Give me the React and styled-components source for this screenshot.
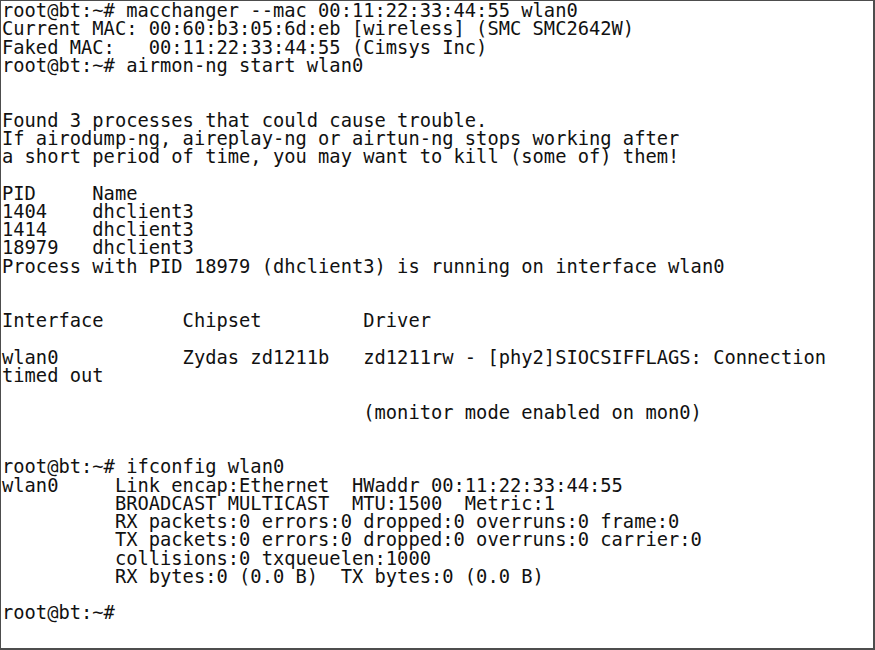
import React from "react";
import styled, { createGlobalStyle } from "styled-components";

const GlobalStyle = createGlobalStyle`
  html, body {
    margin: 0;
    padding: 0;
    background: #ffffff;
  }
`;

const lines = [
  "root@bt:~# macchanger --mac 00:11:22:33:44:55 wlan0",
  "Current MAC: 00:60:b3:05:6d:eb [wireless] (SMC SMC2642W)",
  "Faked MAC:   00:11:22:33:44:55 (Cimsys Inc)",
  "root@bt:~# airmon-ng start wlan0",
  "",
  "",
  "Found 3 processes that could cause trouble.",
  "If airodump-ng, aireplay-ng or airtun-ng stops working after",
  "a short period of time, you may want to kill (some of) them!",
  "",
  "PID     Name",
  "1404    dhclient3",
  "1414    dhclient3",
  "18979   dhclient3",
  "Process with PID 18979 (dhclient3) is running on interface wlan0",
  "",
  "",
  "Interface       Chipset         Driver",
  "",
  "wlan0           Zydas zd1211b   zd1211rw - [phy2]SIOCSIFFLAGS: Connection",
  "timed out",
  "",
  "                                (monitor mode enabled on mon0)",
  "",
  "",
  "root@bt:~# ifconfig wlan0",
  "wlan0     Link encap:Ethernet  HWaddr 00:11:22:33:44:55",
  "          BROADCAST MULTICAST  MTU:1500  Metric:1",
  "          RX packets:0 errors:0 dropped:0 overruns:0 frame:0",
  "          TX packets:0 errors:0 dropped:0 overruns:0 carrier:0",
  "          collisions:0 txqueuelen:1000",
  "          RX bytes:0 (0.0 B)  TX bytes:0 (0.0 B)",
  "",
  "root@bt:~#",
];

const App = () => {
  return (
    <>
      <GlobalStyle />
      <Frame>
        <Console>
          {lines.map((text, i) => (
            <Line key={i}>{text || "\u00a0"}</Line>
          ))}
        </Console>
      </Frame>
    </>
  );
};

export default App;

const Frame = styled.div`
  box-sizing: border-box;
  width: 875px;
  height: 650px;
  background: #ffffff;
  border-style: solid;
  border-color: #4d4d4d;
  border-width: 1px 2px 2px 1px;
  overflow: hidden;
`;

const Console = styled.div`
  display: flex;
  flex-direction: column;
  padding: 1px 0 0 1px;
  font-family: "DejaVu Sans Mono", "Liberation Mono", monospace;
  font-size: 18.75px;
  color: #111111;
`;

const Line = styled.div`
  white-space: pre;
  height: 18.25px;
  line-height: 18.25px;
`;
